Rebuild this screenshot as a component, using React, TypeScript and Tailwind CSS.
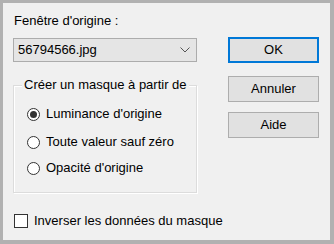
import React from "react";

function Radio({ checked, label, top }: { checked?: boolean; label: string; top: string }) {
  return (
    <div className={`flex items-center ${top}`}>
      <div className="w-[13px] h-[13px] rounded-full border border-[#333333] bg-white flex items-center justify-center shrink-0">
        {checked && <div className="w-[7px] h-[7px] rounded-full bg-[#333333]" />}
      </div>
      <span className="ml-[6px] leading-[16px] whitespace-nowrap">{label}</span>
    </div>
  );
}

function Btn({ label, primary, className }: { label: string; primary?: boolean; className?: string }) {
  return (
    <div
      className={`w-[91px] h-[26px] flex items-center justify-center bg-[#e1e1e1] ${
        primary ? "border-2 border-[#0078d7]" : "border border-[#adadad]"
      } ${className ?? ""}`}
    >
      {label}
    </div>
  );
}

export default function App() {
  return (
    <div
      className="w-[334px] h-[244px] bg-[#f0f0f0] border-l-[3px] border-t-[3px] border-r-[4px] border-b-[4px] border-[#b1b1b1] text-[13px] text-black flex"
      style={{ fontFamily: '"Liberation Sans", Arial, sans-serif' }}
    >
      <div className="flex flex-col pl-[10px] w-[194px] shrink-0">
        <div className="mt-[10px] leading-[16px] pl-[1px] whitespace-nowrap">Fenêtre d'origine :</div>
        <div className="mt-[9px] h-[24px] w-[184px] bg-[#e5e5e5] border border-[#acacac] flex items-center justify-between pl-[4px] pr-[6px]">
          <span>56794566.jpg</span>
          <svg width="10" height="6" viewBox="0 0 10 6">
            <path d="M0.5 0.5 L5 5 L9.5 0.5" fill="none" stroke="#555" strokeWidth="1" />
          </svg>
        </div>
        <div className="relative mt-[23px] w-[184px] h-[108px] border border-[#dcdcdc] shadow-[inset_1px_1px_0_#ffffff,1px_1px_0_#ffffff]">
          <div className="absolute left-[8px] -top-[9px] px-[2px] bg-[#f0f0f0] leading-[16px] whitespace-nowrap">
            Créer un masque à partir de
          </div>
          <div className="flex flex-col pl-[13px]">
            <Radio checked label="Luminance d'origine" top="mt-[20px]" />
            <Radio label="Toute valeur sauf zéro" top="mt-[12px]" />
            <Radio label="Opacité d'origine" top="mt-[10px]" />
          </div>
        </div>
        <div className="flex items-center mt-[20px] pl-[1px]">
          <div className="w-[14px] h-[14px] border border-[#333333] bg-white shrink-0" />
          <span className="ml-[6px] leading-[16px] whitespace-nowrap">Inverser les données du masque</span>
        </div>
      </div>
      <div className="flex flex-col ml-[31px] mt-[34px] shrink-0">
        <Btn label="OK" primary />
        <Btn label="Annuler" className="mt-[13px]" />
        <Btn label="Aide" className="mt-[10px]" />
      </div>
    </div>
  );
}
